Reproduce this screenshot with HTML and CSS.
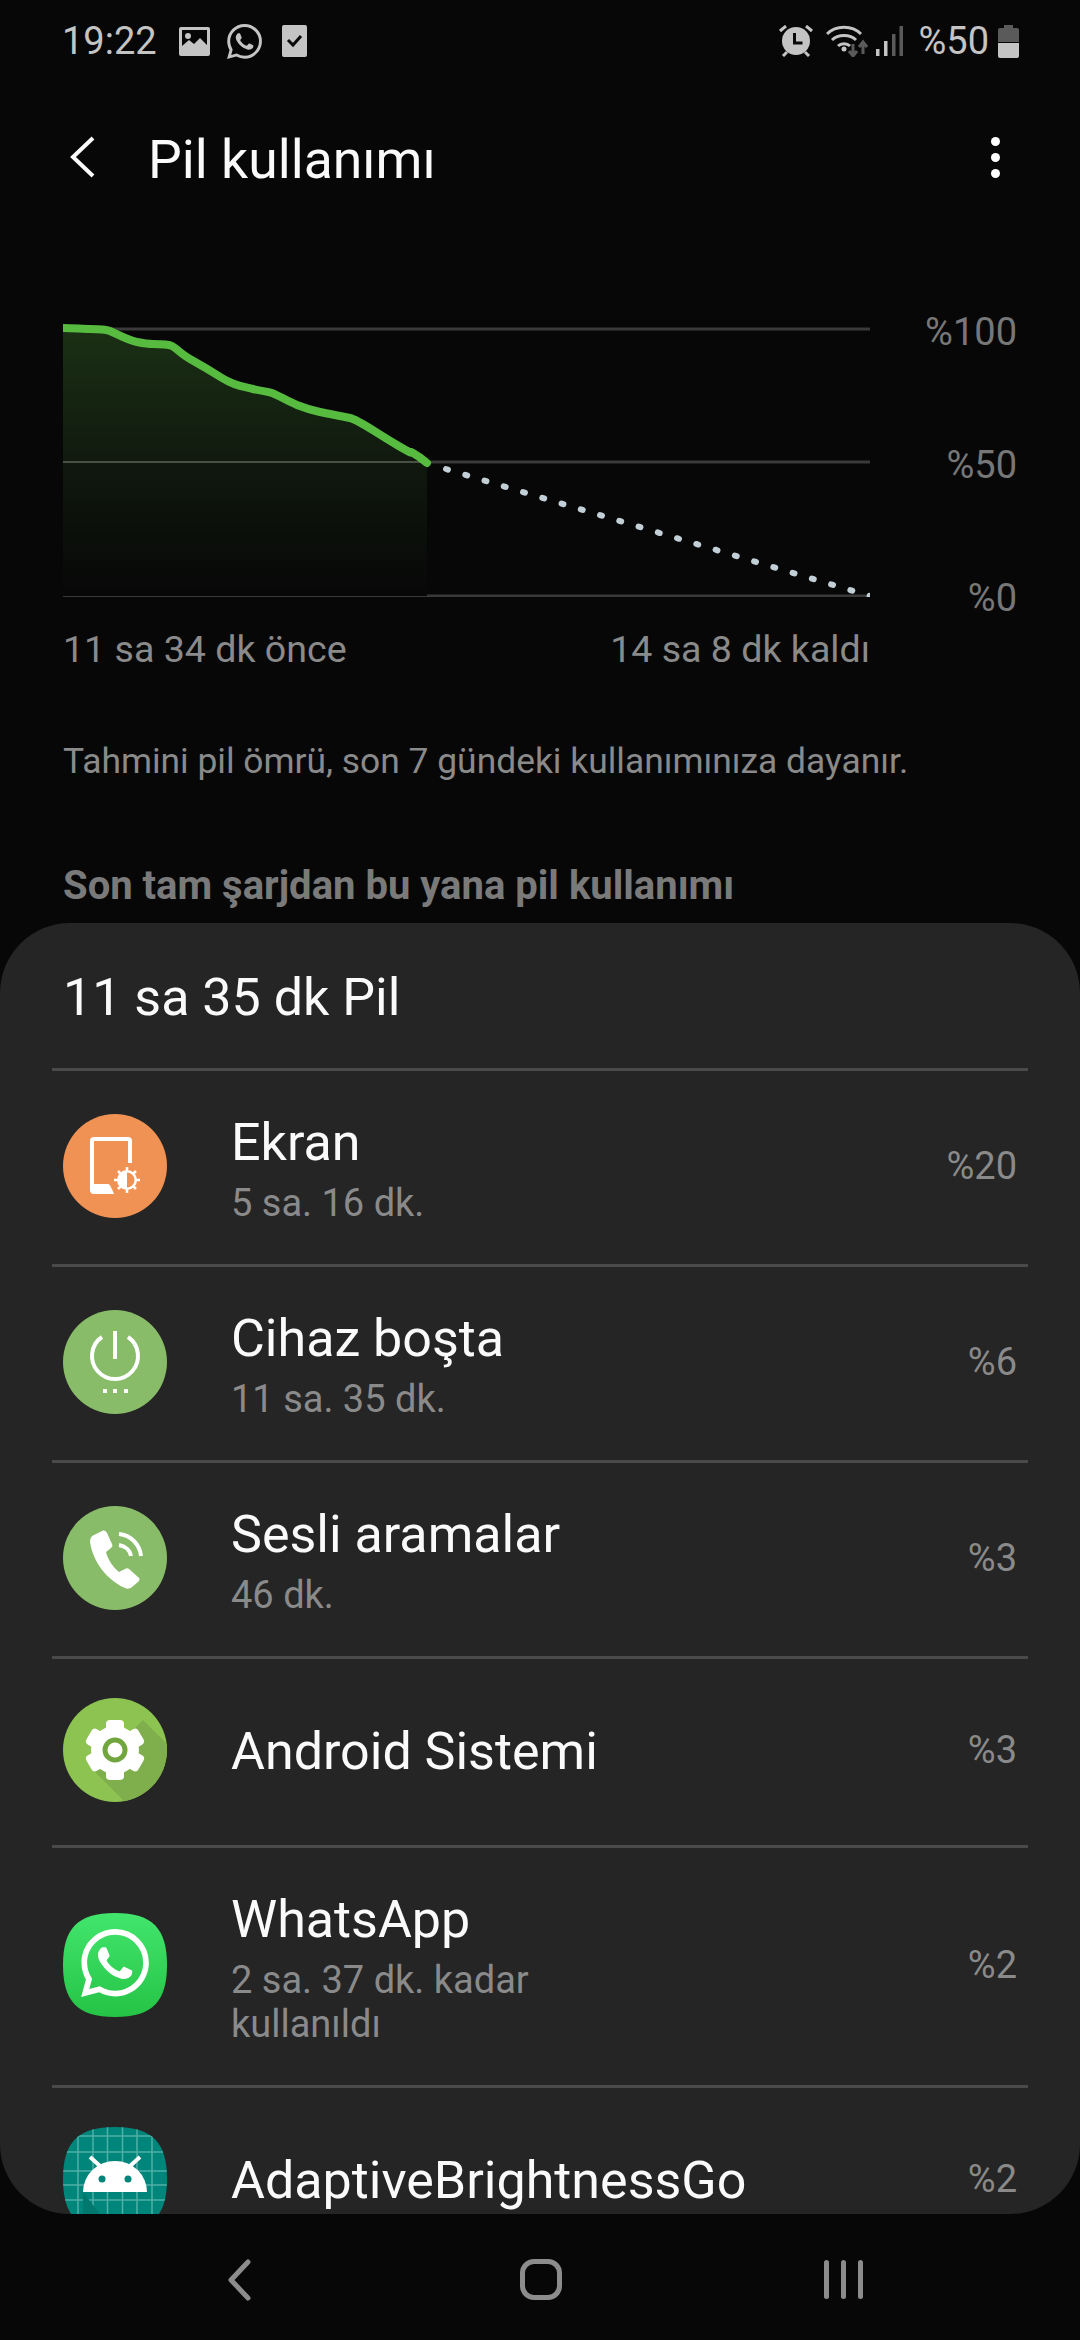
FILE: index.html
```html
<!DOCTYPE html>
<html lang="tr">
<head>
    <meta charset="UTF-8">
    <meta name="viewport" content="width=device-width, initial-scale=1.0">
    <title>Pil kullanımı</title>
    <link rel="stylesheet" href="styles.css">
</head>
<body>
    <svg class="defs" width="0" height="0">
        <symbol id="wa" viewBox="0 0 24 24">
            <path d="M17.472 14.382c-.297-.149-1.758-.867-2.03-.967-.273-.099-.471-.148-.67.15-.197.297-.767.966-.94 1.164-.173.199-.347.223-.644.075-.297-.15-1.255-.463-2.39-1.475-.883-.788-1.48-1.761-1.653-2.059-.173-.297-.018-.458.13-.606.134-.133.298-.347.446-.52.149-.174.198-.298.298-.497.099-.198.05-.371-.025-.52-.075-.149-.669-1.612-.916-2.207-.242-.579-.487-.5-.669-.51-.173-.008-.371-.01-.57-.01-.198 0-.52.074-.792.372-.272.297-1.04 1.016-1.04 2.479 0 1.462 1.065 2.875 1.213 3.074.149.198 2.096 3.2 5.077 4.487.709.306 1.262.489 1.694.625.712.227 1.36.195 1.871.118.571-.085 1.758-.719 2.006-1.413.248-.694.248-1.289.173-1.413-.074-.124-.272-.198-.57-.347m-5.421 7.403h-.004a9.87 9.87 0 01-5.031-1.378l-.361-.214-3.741.982.998-3.648-.235-.374a9.86 9.86 0 01-1.51-5.26c.001-5.45 4.436-9.884 9.888-9.884 2.64 0 5.122 1.03 6.988 2.898a9.825 9.825 0 012.893 6.994c-.003 5.45-4.437 9.884-9.885 9.884m8.413-18.297A11.815 11.815 0 0012.05 0C5.495 0 .16 5.335.157 11.892c0 2.096.547 4.142 1.588 5.945L.057 24l6.305-1.654a11.882 11.882 0 005.683 1.448h.005c6.554 0 11.89-5.335 11.893-11.893a11.821 11.821 0 00-3.48-8.413Z"/>
        </symbol>
    </svg>

    <div class="status">
        <span class="status-time">19:22</span>
        <svg class="ic-image" viewBox="0 0 31 29">
            <path fill="#c4c4c4" fill-rule="evenodd" d="M2 0h27a2 2 0 012 2v25a2 2 0 01-2 2H2a2 2 0 01-2-2V2a2 2 0 012-2zM3 3v16l7-6 5 4 6-6 7 7V3z"/>
            <circle cx="9" cy="9" r="3" fill="#c4c4c4"/>
        </svg>
        <svg class="ic-wa"><use href="#wa" fill="#c4c4c4"/></svg>
        <svg class="ic-check" viewBox="0 0 25 32">
            <rect width="25" height="32" rx="2" fill="#c4c4c4"/>
            <path d="M6 15l5 5 8-9" fill="none" stroke="#0a0a0a" stroke-width="3"/>
        </svg>
        <span class="status-gap"></span>
        <svg class="ic-alarm" viewBox="0 0 34 32">
            <circle cx="17" cy="16" r="14" fill="#c4c4c4"/>
            <path d="M15.5 8v10h8" fill="none" stroke="#0a0a0a" stroke-width="3"/>
            <path d="M1 6l6-5M33 6l-6-5M4 31l4-4M30 31l-4-4" stroke="#c4c4c4" stroke-width="3" fill="none"/>
        </svg>
        <svg class="ic-wifi" viewBox="0 0 42 32">
            <path d="M1 9C10 0 26 0 35 9M6 15c6-6 18-6 24 0M12 21c3-3 9-3 12 0" fill="none" stroke="#c4c4c4" stroke-width="3"/>
            <circle cx="18" cy="24" r="2.5" fill="#c4c4c4"/>
            <path d="M27 19v11M23 26l4 5 4-5" fill="none" stroke="#5a5a5a" stroke-width="3"/>
            <path d="M37 29V18M33 22l4-5 4 5" fill="none" stroke="#5a5a5a" stroke-width="3"/>
        </svg>
        <svg class="ic-signal" viewBox="0 0 27 30">
            <rect x="0" y="23" width="3.5" height="7" fill="#c4c4c4"/>
            <rect x="8" y="15" width="3.5" height="15" fill="#c4c4c4"/>
            <rect x="16" y="8" width="3.5" height="22" fill="#5a5a5a"/>
            <rect x="23.5" y="0" width="3.5" height="30" fill="#5a5a5a"/>
        </svg>
        <span class="status-pct">%50</span>
        <svg class="ic-battery" viewBox="0 0 21 33">
            <path d="M6 0h9v3h4a2 2 0 012 2v12H0V5a2 2 0 012-2h4z" fill="#5a5a5a"/>
            <path d="M0 18h21v13a2 2 0 01-2 2H2a2 2 0 01-2-2z" fill="#c4c4c4"/>
        </svg>
    </div>

    <div class="appbar">
        <svg class="back" viewBox="0 0 26 42"><path d="M24 2L4 21l20 19" fill="none" stroke="#fafafa" stroke-width="4"/></svg>
        <h1 class="appbar-title">Pil kullanımı</h1>
        <div class="more"><i></i><i></i><i></i></div>
    </div>

    <div class="chart">
        <svg class="chart-plot" viewBox="0 0 807 280">
            <defs>
                <linearGradient id="fade" x1="0" y1="0" x2="0" y2="1">
                    <stop offset="0" stop-color="#1b3015"/>
                    <stop offset="0.5" stop-color="#10190e"/>
                    <stop offset="1" stop-color="#070707"/>
                </linearGradient>
            </defs>
            <path d="M0 12H807M0 145H807M0 279H807" stroke="#3a3a3a" stroke-width="3" fill="none"/>
            <path fill="url(#fade)" d="M0 11 27 12 47 14 74 25 87 27 109 29 127 42 159 61 190 72 209 76 234 88 257 95 287 101 334 128 350 136 364 146V279H0Z"/>
            <path d="M0 145H364" stroke="#4a4f45" stroke-width="2" fill="none"/>
            <path fill="none" stroke="#56bb3f" stroke-width="8" stroke-linecap="round" stroke-linejoin="round" d="M0 11C10 11 20 12 27 12S42 12 47 14 64 23 74 25 84 27 90 27 105 27 109 29 118 37 127 42 148 54 159 61 178 69 190 72 203 74 209 76 224 84 234 88 248 93 257 95 278 99 287 101 310 114 334 128 343 132 350 136 358 141 364 146"/>
            <path fill="none" stroke="#c3cfd6" stroke-width="6" stroke-linecap="round" stroke-dasharray="2 18.1" d="M383 152 807 279"/>
        </svg>
        <div class="chart-axis">
            <span>%100</span>
            <span>%50</span>
            <span>%0</span>
        </div>
    </div>
    <div class="chart-times">
        <span>11 sa 34 dk önce</span>
        <span>14 sa 8 dk kaldı</span>
    </div>

    <p class="note">Tahmini pil ömrü, son 7 gündeki kullanımınıza dayanır.</p>
    <h2 class="section">Son tam şarjdan bu yana pil kullanımı</h2>

    <div class="sheet">
        <div class="sheet-title">11 sa 35 dk Pil</div>

        <div class="row">
            <svg class="icon" viewBox="0 0 104 104">
                <circle cx="52" cy="52" r="52" fill="#f09254"/>
                <path d="M67 49V27a2 2 0 00-2-2H31a2 2 0 00-2 2v49a2 2 0 002 2h18" fill="none" stroke="#fff" stroke-width="4"/>
                <path d="M29 70h16c2 0 4 5 6 10H31a2 2 0 01-2-2z" fill="#fff"/>
                <path d="M64 53v26M51 66h26M55 57l18 18M73 57L55 75" stroke="#fff" stroke-width="2.5"/>
                <circle cx="64" cy="66" r="10" fill="#fff"/>
                <path d="M64 58.500a7.500 7.500 0 010 15z" fill="#f09254"/>
            </svg>
            <div class="row-text">
                <div class="row-name">Ekran</div>
                <div class="row-sub">5 sa. 16 dk.</div>
            </div>
            <div class="row-pct">%20</div>
        </div>

        <div class="row">
            <svg class="icon" viewBox="0 0 104 104">
                <circle cx="52" cy="52" r="52" fill="#88bc69"/>
                <path d="M39 27a23 23 0 1026 0" fill="none" stroke="#fff" stroke-width="4"/>
                <path d="M52 21v28" stroke="#fff" stroke-width="4"/>
                <path d="M40 81h4M50 81h4M61 81h4" stroke="#fff" stroke-width="4"/>
            </svg>
            <div class="row-text">
                <div class="row-name">Cihaz boşta</div>
                <div class="row-sub">11 sa. 35 dk.</div>
            </div>
            <div class="row-pct">%6</div>
        </div>

        <div class="row">
            <svg class="icon" viewBox="0 0 104 104">
                <circle cx="52" cy="52" r="52" fill="#88bc69"/>
                <path d="M31 29l8-4c2-1 4 0 5 2l5 11c1 2 0 3-1 4l-5 4c2 8 7 15 13 20l6-3c1-1 3-1 4 0l9 8c2 1 2 3 0 5l-6 5c-2 2-5 2-7 1C44 74 30 56 27 36c0-3 1-6 4-7z" fill="#fff"/>
                <path d="M56 39c6 1 11 5 12 11M56 28c12 1 21 11 22 22" fill="none" stroke="#fff" stroke-width="4"/>
            </svg>
            <div class="row-text">
                <div class="row-name">Sesli aramalar</div>
                <div class="row-sub">46 dk.</div>
            </div>
            <div class="row-pct">%3</div>
        </div>

        <div class="row">
            <svg class="icon" viewBox="0 0 104 104">
                <defs><clipPath id="disc"><circle cx="52" cy="52" r="52"/></clipPath></defs>
                <circle cx="52" cy="52" r="52" fill="#8dc351"/>
                <path d="M30 72 80 22l30 30v60H70z" fill="#7fae4c" clip-path="url(#disc)"/>
                <g fill="#fff">
                    <circle cx="52" cy="52" r="24"/>
                    <rect x="43" y="22" width="18" height="60" rx="4"/>
                    <rect x="43" y="22" width="18" height="60" rx="4" transform="rotate(60 52 52)"/>
                    <rect x="43" y="22" width="18" height="60" rx="4" transform="rotate(120 52 52)"/>
                </g>
                <circle cx="52" cy="52" r="10" fill="#fff" stroke="#71a63f" stroke-width="5"/>
            </svg>
            <div class="row-text">
                <div class="row-name">Android Sistemi</div>
            </div>
            <div class="row-pct">%3</div>
        </div>

        <div class="row">
            <svg class="icon" viewBox="0 0 104 104">
                <defs>
                    <linearGradient id="wagreen" x1="0" y1="0" x2="0" y2="1">
                        <stop offset="0" stop-color="#42e66c"/>
                        <stop offset="1" stop-color="#25c346"/>
                    </linearGradient>
                </defs>
                <path fill="url(#wagreen)" d="M52 0C90 0 104 16 104 52S90 104 52 104 0 88 0 52 14 0 52 0Z"/>
                <use href="#wa" x="18" y="16" width="68" height="68" fill="#fff"/>
            </svg>
            <div class="row-text">
                <div class="row-name">WhatsApp</div>
                <div class="row-sub">2 sa. 37 dk. kadar<br>kullanıldı</div>
            </div>
            <div class="row-pct">%2</div>
        </div>

        <div class="row">
            <svg class="icon" viewBox="0 0 104 104">
                <defs><clipPath id="squircle"><path d="M52 0C90 0 104 16 104 52S90 104 52 104 0 88 0 52 14 0 52 0Z"/></clipPath></defs>
                <g clip-path="url(#squircle)">
                    <rect width="104" height="104" fill="#00857a"/>
                    <path d="M15 0V104M30 0V104M44.500 0V104M59.500 0V104M74 0V104M89 0V104M0 9H104M0 25H104M0 44H104M0 58H104M0 73H104" stroke="#4fb0a8" stroke-width="1.5"/>
                    <path d="M20 65 50 104H20z" fill="#00786e"/>
                    <path d="M20 65a32 31 0 0164 0z" fill="#fff"/>
                    <path d="M27 30l10 9M77 30L67 39" stroke="#fff" stroke-width="4"/>
                    <circle cx="39" cy="52" r="3.500" fill="#00857a"/>
                    <circle cx="65" cy="52" r="3.500" fill="#00857a"/>
                </g>
            </svg>
            <div class="row-text">
                <div class="row-name">AdaptiveBrightnessGo</div>
            </div>
            <div class="row-pct">%2</div>
        </div>
    </div>

    <div class="navbar">
        <svg class="nav-back" viewBox="0 0 24 42"><path d="M21 3 4 21l17 18" fill="none" stroke="#8c8c8c" stroke-width="5" stroke-linecap="round" stroke-linejoin="round"/></svg>
        <div class="nav-home"></div>
        <div class="nav-recent"><i></i><i></i><i></i></div>
    </div>
</body>
</html>
```

FILE: styles.css
```css
* {
    box-sizing: border-box;
}

html, body {
    margin: 0;
    padding: 0;
}

body {
    width: 1080px;
    height: 2340px;
    overflow: hidden;
    background-color: #070707;
    color: #fafafa;
    font-family: Roboto, "Noto Sans", sans-serif;
}

.defs {
    display: block;
}

/* status bar */
.status {
    display: flex;
    align-items: center;
    height: 82px;
    padding: 0 61px 0 62px;
    color: #c4c4c4;
}

.status-time {
    font-size: 38px;
    margin-right: 22px;
}

.status-gap {
    flex: 1;
}

.status-pct {
    font-size: 38px;
    margin: 0 9px 0 15px;
}

.ic-image { width: 31px; height: 29px; margin-right: 17px; }
.ic-wa { width: 35px; height: 35px; margin-right: 20px; }
.ic-check { width: 25px; height: 32px; }
.ic-alarm { width: 34px; height: 32px; margin-right: 13px; }
.ic-wifi { width: 42px; height: 32px; margin-right: 8px; }
.ic-signal { width: 27px; height: 30px; }
.ic-battery { width: 21px; height: 33px; }

/* title row */
.appbar {
    display: flex;
    align-items: center;
    height: 150px;
    padding: 0 80px 0 69px;
}

.back {
    width: 26px;
    height: 42px;
    margin-right: 53px;
}

.appbar-title {
    flex: 1;
    margin: 4px 0 0;
    font-size: 53.5px;
    font-weight: 400;
}

.more i {
    display: block;
    width: 9px;
    height: 9px;
    margin: 7px 0;
    border-radius: 50%;
    background-color: #fff;
}

/* chart */
.chart {
    display: flex;
    margin: 85px 63px 0 63px;
}

.chart-plot {
    display: block;
    width: 807px;
    height: 280px;
}

.chart-axis {
    flex: 1;
    display: flex;
    flex-direction: column;
    justify-content: space-between;
    align-items: flex-end;
    height: 308px;
    margin: -6px 0 -22px;
    font-size: 38px;
    line-height: 42px;
    color: #777;
}

.chart-times {
    display: flex;
    justify-content: space-between;
    width: 807px;
    margin: 30px 0 0 63px;
    font-size: 37.6px;
    line-height: 44px;
    color: #8a8a8a;
}

.note {
    margin: 68px 0 0 63px;
    font-size: 35.4px;
    line-height: 44px;
    color: #8a8a8a;
}

.section {
    margin: 81px 0 0 63px;
    font-size: 40px;
    line-height: 44px;
    font-weight: 700;
    color: #7a7a7a;
}

/* list sheet */
.sheet {
    height: 1291px;
    margin-top: 15px;
    padding: 0 52px;
    overflow: hidden;
    background-color: #252525;
    border-radius: 70px;
}

.sheet-title {
    display: flex;
    align-items: center;
    height: 145px;
    padding: 4px 11px 0;
    font-size: 52px;
}

.row {
    display: flex;
    align-items: center;
    padding: 39px 11px 43px;
    border-top: 3px solid #4a4a4a;
}

.icon {
    flex: none;
    display: block;
    width: 104px;
    height: 104px;
    margin-right: 64px;
}

.row-text {
    flex: 1;
    margin-bottom: -3.5px;
}

.row-name {
    font-size: 52px;
    line-height: 65px;
}

.row-sub {
    margin-top: 5.5px;
    font-size: 38px;
    line-height: 44px;
    color: #8a8a8a;
}

.row-pct {
    font-size: 38px;
    color: #8a8a8a;
}

/* bottom nav */
.navbar {
    position: relative;
    height: 126px;
}

.nav-back {
    position: absolute;
    left: 227px;
    top: 45px;
    width: 24px;
    height: 42px;
}

.nav-home {
    position: absolute;
    left: 520px;
    top: 45px;
    width: 42px;
    height: 41px;
    border: 5px solid #8c8c8c;
    border-radius: 14px;
}

.nav-recent {
    position: absolute;
    left: 824px;
    top: 46px;
    display: flex;
    gap: 12px;
}

.nav-recent i {
    display: block;
    width: 5px;
    height: 39px;
    border-radius: 3px;
    background-color: #8c8c8c;
}
```
